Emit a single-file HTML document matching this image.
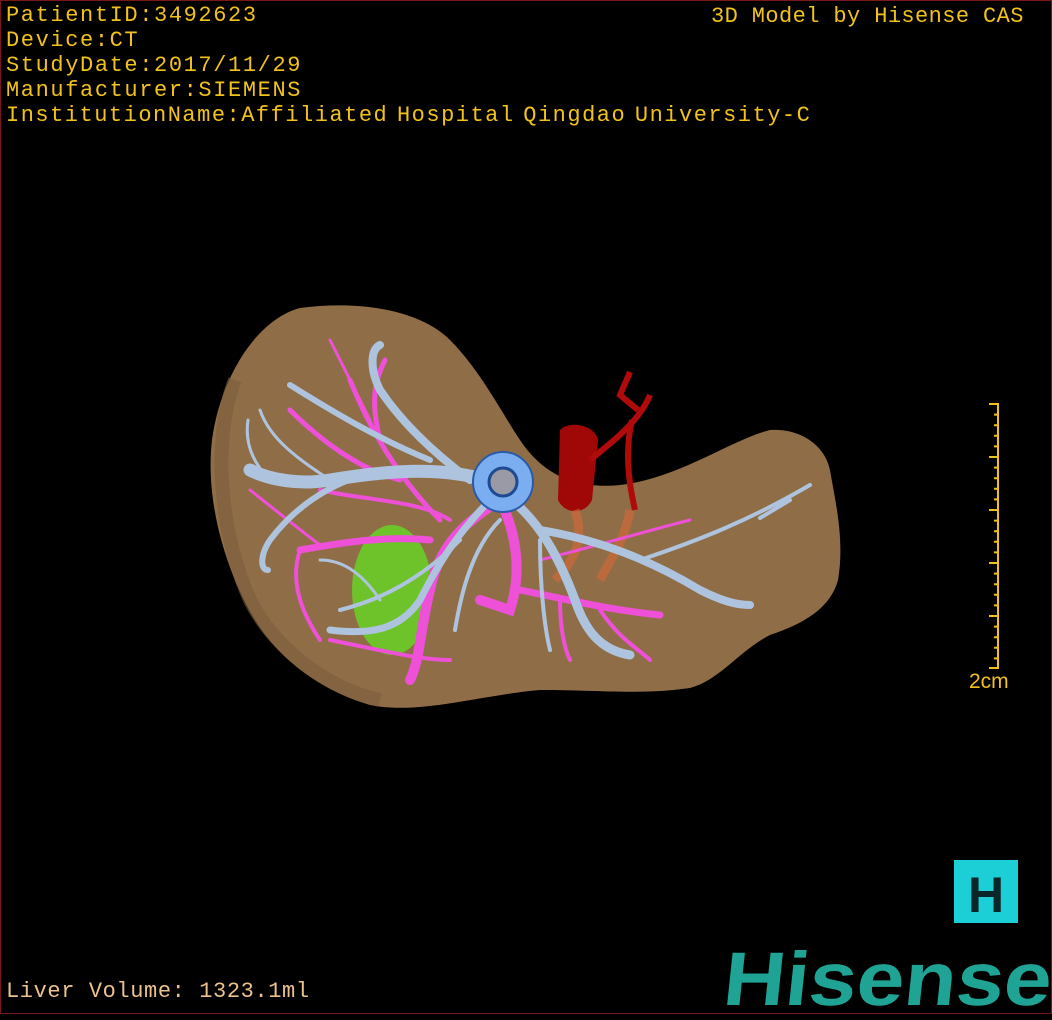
<!DOCTYPE html>
<html><head><meta charset="utf-8"><style>
html,body{margin:0;padding:0;background:#000;}
body{width:1052px;height:1020px;position:relative;overflow:hidden;}
.frame{position:absolute;left:0;top:0;width:1050px;height:1012px;border:1px solid #7a1818;}
.t{position:absolute;font-family:"Liberation Mono",monospace;font-size:22px;color:#f2c21c;white-space:pre;letter-spacing:1.6px;line-height:25px;}
</style></head><body>
<div class="frame"></div>
<div class="t" style="left:6px;top:3px">PatientID:3492623<br>Device:CT<br>StudyDate:2017/11/29<br>Manufacturer:SIEMENS<br><span style="letter-spacing:1.5px;word-spacing:-6px">InstitutionName:Affiliated Hospital Qingdao University-C</span></div>
<div class="t" style="left:711px;top:4px;letter-spacing:0.4px">3D Model by Hisense CAS</div>
<div class="t" style="left:6px;top:979px;color:#ecc28c;letter-spacing:0.6px">Liver Volume: 1323.1ml</div>
<svg width="1052" height="1020" style="position:absolute;left:0;top:0">
<path d="M300,308 C360,300 420,310 450,340 C480,370 500,410 520,440 C540,470 570,490 620,485 C680,478 730,440 770,430 C800,428 825,445 830,470 C835,500 845,540 838,580 C830,610 800,625 770,635 C740,650 720,680 690,688 C640,695 600,690 540,690 C480,695 420,715 370,705 C320,690 280,660 255,620 C225,570 205,500 212,440 C220,380 255,320 300,308 Z" fill="#8f6e47"/>
<path d="M235,380 C215,430 215,520 250,600 C275,650 330,690 380,700" fill="none" stroke="#7d5e3c" stroke-width="14" opacity="0.6"/>
<path d="M560,430 C570,420 595,425 598,440 L592,500 C585,515 565,515 558,500 Z" fill="#a00808"/>
<path d="M590,460 C615,440 640,420 650,395 M632,420 C625,450 628,480 635,510 M630,372 L620,395 L638,410" fill="none" stroke="#b00a0a" stroke-width="6"/>
<path d="M575,510 C585,540 575,560 555,580 M630,510 C625,540 610,560 600,580" fill="none" stroke="#d86838" stroke-width="9" opacity="0.6"/>
<ellipse cx="392" cy="590" rx="40" ry="65" fill="#6ec22a"/>
<g fill="none" stroke="#ee50d8" stroke-linecap="round">
<path d="M500,500 C470,520 440,540 430,590 C420,630 420,660 410,680" stroke-width="10"/>
<path d="M500,500 C520,540 520,580 510,610 L480,600" stroke-width="10"/>
<path d="M520,590 C570,600 610,610 660,615 M430,540 C380,535 330,545 300,550" stroke-width="7"/>
<path d="M440,520 C400,480 370,430 350,380 M400,480 C360,470 320,440 290,410 M380,440 C370,400 375,380 385,360" stroke-width="5"/>
<path d="M450,520 C420,500 360,500 320,490 M300,550 C290,580 300,610 320,640 M330,640 C380,650 420,660 450,660 M560,600 C560,630 565,650 570,660 M600,610 C620,640 640,650 650,660" stroke-width="4"/>
<path d="M540,560 C600,545 650,530 690,520 M330,340 C345,370 360,400 370,420 M250,490 C275,510 300,530 320,545" stroke-width="3"/>
</g>
<g fill="none" stroke="#aec4de" stroke-linecap="round">
<path d="M500,485 C450,465 390,470 330,480 C300,485 270,480 250,470" stroke-width="13"/>
<path d="M505,495 C540,520 560,560 575,600 C585,630 600,650 630,655" stroke-width="9"/>
<path d="M540,530 C600,540 650,560 700,590 C720,600 735,605 750,605" stroke-width="8"/>
<path d="M640,560 C700,540 750,520 810,485 M760,518 L790,500" stroke-width="4"/>
<path d="M495,495 C460,530 440,560 420,600 C400,630 370,635 330,630" stroke-width="7"/>
<path d="M470,480 C430,450 400,420 380,390 C370,370 370,350 380,345" stroke-width="8"/>
<path d="M430,460 C380,440 330,410 290,385" stroke-width="6"/>
<path d="M400,470 C350,470 300,500 270,540 C260,555 260,570 268,570" stroke-width="6"/>
<path d="M460,540 C420,580 380,600 340,610 M500,520 C470,550 460,600 455,630 M540,540 C540,590 545,630 550,650" stroke-width="4"/>
<path d="M330,480 C300,460 270,440 260,410 M270,480 C250,460 245,440 248,420 M380,600 C360,570 340,560 320,560" stroke-width="3"/>
</g>
<circle cx="503" cy="482" r="30" fill="#7aaef0" stroke="#2a5aa8" stroke-width="2"/>
<circle cx="503" cy="482" r="14" fill="#9a9aa6" stroke="#1d4a90" stroke-width="3"/>
<g stroke="#f0c020" stroke-width="2">
<line x1="998" y1="403" x2="998" y2="669"/>
<line x1="989" y1="404" x2="999" y2="404"/><line x1="989" y1="457" x2="999" y2="457"/><line x1="989" y1="510" x2="999" y2="510"/><line x1="989" y1="563" x2="999" y2="563"/><line x1="989" y1="616" x2="999" y2="616"/><line x1="989" y1="668" x2="999" y2="668"/>
<path d="M994,414.6h4M994,425.2h4M994,435.8h4M994,446.4h4M994,467.6h4M994,478.2h4M994,488.8h4M994,499.4h4M994,520.6h4M994,531.2h4M994,541.8h4M994,552.4h4M994,573.6h4M994,584.2h4M994,594.8h4M994,605.4h4M994,626.6h4M994,637.2h4M994,647.8h4M994,658.4h4"/>
</g>
<text x="969" y="688" font-family="Liberation Sans,sans-serif" font-size="21" fill="#f0c020">2cm</text>
<rect x="954" y="860" width="64" height="63" fill="#1ccfd6"/>
<text x="986" y="912" text-anchor="middle" font-family="Liberation Sans,sans-serif" font-weight="bold" font-size="50" fill="#0a2628">H</text>
<text x="722" y="1005" font-family="Liberation Sans,sans-serif" font-weight="bold" font-size="76" fill="#1fa394" textLength="328" lengthAdjust="spacingAndGlyphs" transform="skewX(-6) translate(105,0)">Hisense</text>
</svg>
</body></html>
